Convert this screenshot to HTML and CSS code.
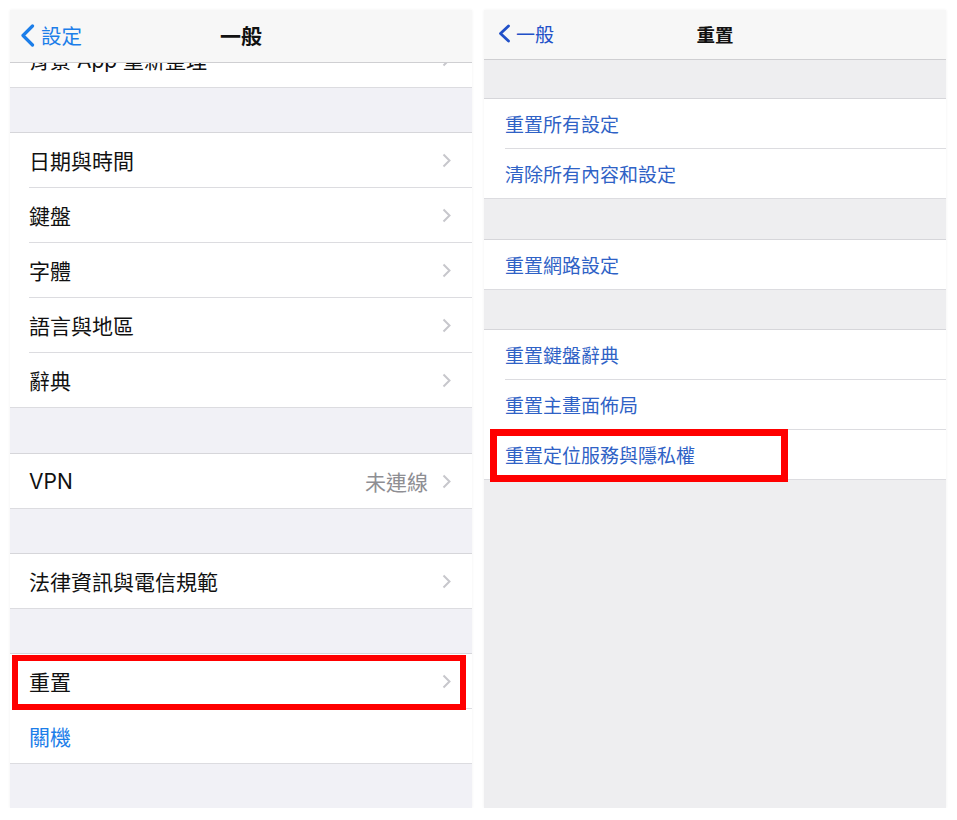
FILE: index.html
```html
<!DOCTYPE html>
<html lang="zh-Hant">
<head>
    <meta charset="UTF-8">
    <meta name="viewport" content="width=device-width, initial-scale=1.0">
    <title>一般 / 重置</title>
    <link rel="stylesheet" href="styles.css">
</head>
<body>
    <div class="shots">
        <!-- Settings > General -->
        <div class="phone general">
            <div class="navbar">
                <a class="back">
                    <svg width="15" height="23" viewBox="0 0 15 23"><path d="M12.5 2 L3 11.5 L12.5 21" fill="none" stroke="currentColor" stroke-width="3.2" stroke-linecap="round" stroke-linejoin="round"/></svg>
                    設定
                </a>
                <div class="title">一般</div>
                <div></div>
            </div>

            <div class="clip">
                <div class="row">
                    <div class="cell"><span class="label">背景 App 重新整理</span><svg class="chev" width="9" height="15" viewBox="0 0 9 15"><path d="M1.5 1.5 L7.5 7.5 L1.5 13.5" fill="none" stroke="#c7c7cc" stroke-width="2"/></svg></div>
                </div>
            </div>

            <div class="gap"></div>
            <div class="group">
                <div class="row"><div class="cell"><span class="label">日期與時間</span><svg class="chev" width="9" height="15" viewBox="0 0 9 15"><path d="M1.5 1.5 L7.5 7.5 L1.5 13.5" fill="none" stroke="#c7c7cc" stroke-width="2"/></svg></div></div>
                <div class="row"><div class="cell"><span class="label">鍵盤</span><svg class="chev" width="9" height="15" viewBox="0 0 9 15"><path d="M1.5 1.5 L7.5 7.5 L1.5 13.5" fill="none" stroke="#c7c7cc" stroke-width="2"/></svg></div></div>
                <div class="row"><div class="cell"><span class="label">字體</span><svg class="chev" width="9" height="15" viewBox="0 0 9 15"><path d="M1.5 1.5 L7.5 7.5 L1.5 13.5" fill="none" stroke="#c7c7cc" stroke-width="2"/></svg></div></div>
                <div class="row"><div class="cell"><span class="label">語言與地區</span><svg class="chev" width="9" height="15" viewBox="0 0 9 15"><path d="M1.5 1.5 L7.5 7.5 L1.5 13.5" fill="none" stroke="#c7c7cc" stroke-width="2"/></svg></div></div>
                <div class="row"><div class="cell"><span class="label">辭典</span><svg class="chev" width="9" height="15" viewBox="0 0 9 15"><path d="M1.5 1.5 L7.5 7.5 L1.5 13.5" fill="none" stroke="#c7c7cc" stroke-width="2"/></svg></div></div>
            </div>

            <div class="gap wide"></div>
            <div class="group">
                <div class="row"><div class="cell"><span class="label">VPN</span><span class="detail">未連線</span><svg class="chev" width="9" height="15" viewBox="0 0 9 15"><path d="M1.5 1.5 L7.5 7.5 L1.5 13.5" fill="none" stroke="#c7c7cc" stroke-width="2"/></svg></div></div>
            </div>

            <div class="gap"></div>
            <div class="group">
                <div class="row"><div class="cell"><span class="label">法律資訊與電信規範</span><svg class="chev" width="9" height="15" viewBox="0 0 9 15"><path d="M1.5 1.5 L7.5 7.5 L1.5 13.5" fill="none" stroke="#c7c7cc" stroke-width="2"/></svg></div></div>
            </div>

            <div class="gap"></div>
            <div class="group">
                <div class="row marked">
                    <div class="cell"><span class="label">重置</span><svg class="chev" width="9" height="15" viewBox="0 0 9 15"><path d="M1.5 1.5 L7.5 7.5 L1.5 13.5" fill="none" stroke="#c7c7cc" stroke-width="2"/></svg></div>
                    <div class="highlight"></div>
                </div>
                <div class="row"><div class="cell"><span class="label link">關機</span></div></div>
            </div>
        </div>

        <!-- General > Reset -->
        <div class="phone reset">
            <div class="navbar">
                <a class="back">
                    <svg width="14" height="19" viewBox="0 0 14 19"><path d="M11.5 2 L3.5 9.5 L11.5 17" fill="none" stroke="currentColor" stroke-width="2.8" stroke-linecap="round" stroke-linejoin="round"/></svg>
                    一般
                </a>
                <div class="title">重置</div>
                <div></div>
            </div>

            <div class="gap top"></div>
            <div class="group">
                <div class="row"><div class="cell"><span class="label link">重置所有設定</span></div></div>
                <div class="row"><div class="cell"><span class="label link">清除所有內容和設定</span></div></div>
            </div>

            <div class="gap"></div>
            <div class="group">
                <div class="row"><div class="cell"><span class="label link">重置網路設定</span></div></div>
            </div>

            <div class="gap narrow"></div>
            <div class="group">
                <div class="row"><div class="cell"><span class="label link">重置鍵盤辭典</span></div></div>
                <div class="row"><div class="cell"><span class="label link">重置主畫面佈局</span></div></div>
                <div class="row marked">
                    <div class="cell"><span class="label link">重置定位服務與隱私權</span></div>
                    <div class="highlight"></div>
                </div>
            </div>
        </div>
    </div>
</body>
</html>
```

FILE: styles.css
```css
body {
    margin: 0;
    padding: 0;
    background-color: #ffffff;
    font-family: Inter, "Noto Sans CJK TC", sans-serif;
    color: #111111;
}
.shots {
    display: flex;
    gap: 12px;
    padding: 10px 0 0 10px;
}
.phone {
    width: 462px;
    height: 798px;
    display: flex;
    flex-direction: column;
    box-shadow: 0 0 3px rgba(0,0,0,0.06);
    overflow: hidden;
}
.general {
    background-color: #f1f1f6;
    font-size: 21px;
}
.reset {
    background-color: #eeeef0;
    font-size: 19px;
}

/* nav bar */
.navbar {
    display: grid;
    grid-template-columns: 1fr auto 1fr;
    align-items: center;
    background-color: #f7f7f7;
    border-bottom: 1px solid #cfcfd2;
    flex-shrink: 0;
    box-sizing: border-box;
    padding-bottom: 2px;
}
.general .navbar {
    height: 53px;
}
.reset .navbar {
    height: 50px;
}
.back {
    display: flex;
    align-items: center;
    gap: 6px;
}
.general .back {
    color: #1c7ee9;
    font-size: 20.5px;
    margin-left: 10px;
}
.reset .back {
    color: #2150c8;
    gap: 5px;
    font-size: 19px;
    margin-left: 13px;
}
.title {
    font-weight: 600;
}
.general .title {
    font-size: 21px;
}
.reset .title {
    font-size: 18.5px;
}

/* rows */
.gap {
    height: 44px;
    flex-shrink: 0;
}
.gap.wide {
    height: 45px;
}
.reset .gap {
    height: 40px;
}
.reset .gap.top {
    height: 38px;
}
.reset .gap.narrow {
    height: 39px;
}
.group {
    background-color: #ffffff;
    border-top: 1px solid #d6d6da;
    flex-shrink: 0;
}
.row {
    background-color: #ffffff;
    padding-left: 19px;
}
.reset .row {
    padding-left: 21px;
}
.row:last-child {
    padding-left: 0;
}
.cell {
    height: 55px;
    box-sizing: border-box;
    display: flex;
    align-items: center;
    border-bottom: 1px solid #dcdce0;
    padding-right: 21px;
}
.reset .cell {
    height: 50px;
}
.general .row:last-child .cell {
    padding-left: 19px;
}
.reset .row:last-child .cell {
    padding-left: 21px;
}
.label {
    flex: 1;
}
.detail {
    color: #8e8e93;
    margin-right: 14px;
}
.chev {
    flex-shrink: 0;
}
.general .link {
    color: #1c7ee9;
}
.reset .link {
    color: #2f62c6;
}

/* row cut off under the nav bar */
.clip {
    height: 25px;
    display: flex;
    flex-direction: column;
    justify-content: flex-end;
    overflow: hidden;
    flex-shrink: 0;
}
.clip .row {
    padding-left: 0;
}
.clip .cell {
    flex-shrink: 0;
    padding-left: 19px;
    padding-bottom: 2px;
}

/* red annotation boxes */
.marked {
    position: relative;
}
.highlight {
    position: absolute;
    border: 6px solid #ff0000;
    box-sizing: border-box;
}
.general .highlight {
    left: 2px;
    top: 1px;
    width: 454px;
    height: 55px;
}
.reset .highlight {
    left: 6px;
    top: -1px;
    width: 298px;
    height: 53px;
    border-width: 7px;
}
```
